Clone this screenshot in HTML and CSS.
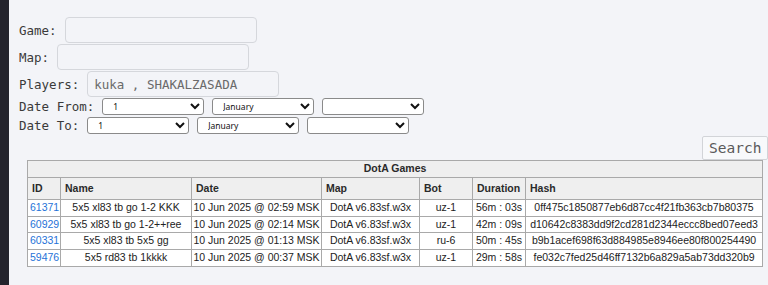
FILE: index.html
```html
<!DOCTYPE html>
<html>

<head>
  <title>DotA Games</title>
  <link rel="stylesheet" href="styles.css">
</head>

<body>
  <form class="search">
    <div class="field">
      <label for="game">Game:</label>
      <input type="text" id="game">
    </div>
    <div class="field">
      <label for="map">Map:</label>
      <input type="text" id="map">
    </div>
    <div class="field">
      <label for="players">Players:</label>
      <input type="text" id="players" value="kuka , SHAKALZASADA">
    </div>
    <div class="field dates">
      <label>Date From:</label>
      <select><option>1</option></select>
      <select><option>January</option></select>
      <select><option></option></select>
    </div>
    <div class="field dates">
      <label>Date To:</label>
      <select><option>1</option></select>
      <select><option>January</option></select>
      <select><option></option></select>
    </div>
    <div class="actions">
      <button type="button">Search</button>
    </div>
  </form>

  <table class="games">
    <colgroup>
      <col class="c-id">
      <col class="c-name">
      <col class="c-date">
      <col class="c-map">
      <col class="c-bot">
      <col class="c-dur">
      <col class="c-hash">
    </colgroup>
    <tr>
      <th colspan="7" class="title">DotA Games</th>
    </tr>
    <tr class="head">
      <th>ID</th>
      <th>Name</th>
      <th>Date</th>
      <th>Map</th>
      <th>Bot</th>
      <th>Duration</th>
      <th>Hash</th>
    </tr>
    <tr>
      <td class="id"><a href="#">61371</a></td>
      <td>5x5 xl83 tb go 1-2 KKK</td>
      <td>10 Jun 2025 @ 02:59 MSK</td>
      <td>DotA v6.83sf.w3x</td>
      <td>uz-1</td>
      <td>56m : 03s</td>
      <td>0ff475c1850877eb6d87cc4f21fb363cb7b80375</td>
    </tr>
    <tr>
      <td class="id"><a href="#">60929</a></td>
      <td>5x5 xl83 tb go 1-2++ree</td>
      <td>10 Jun 2025 @ 02:14 MSK</td>
      <td>DotA v6.83sf.w3x</td>
      <td>uz-1</td>
      <td>42m : 09s</td>
      <td>d10642c8383dd9f2cd281d2344eccc8bed07eed3</td>
    </tr>
    <tr>
      <td class="id"><a href="#">60331</a></td>
      <td>5x5 xl83 tb 5x5 gg</td>
      <td>10 Jun 2025 @ 01:13 MSK</td>
      <td>DotA v6.83sf.w3x</td>
      <td>ru-6</td>
      <td>50m : 45s</td>
      <td>b9b1acef698f63d884985e8946ee80f800254490</td>
    </tr>
    <tr>
      <td class="id"><a href="#">59476</a></td>
      <td>5x5 rd83 tb 1kkkk</td>
      <td>10 Jun 2025 @ 00:37 MSK</td>
      <td>DotA v6.83sf.w3x</td>
      <td>uz-1</td>
      <td>29m : 58s</td>
      <td>fe032c7fed25d46ff7132b6a829a5ab73dd320b9</td>
    </tr>
  </table>
</body>

</html>
```

FILE: styles.css
```css
html {
  background-color: #f3f4f8;
}

body {
  margin: 0;
  min-height: 285px;
  box-sizing: border-box;
  padding: 17px 0 0 10px;
  border-left: 9px solid #24242d;
  background-color: #f3f4f8;
  font-family: "DejaVu Sans Mono", monospace;
  font-size: 12.5px;
  color: #3a3a3a;
}

.search {
  margin: 0;
}

.field {
  display: flex;
  align-items: center;
  gap: 8px;
  margin-bottom: 1px;
}

.field input {
  width: 192px;
  height: 26px;
  box-sizing: border-box;
  padding: 0 6px;
  border: 1px solid #d5d7dc;
  border-radius: 4px;
  background-color: #f3f4f8;
  font-family: "DejaVu Sans Mono", monospace;
  font-size: 12.5px;
  color: #6a6a6a;
  outline: none;
}

.dates {
  margin-top: 1px;
  margin-bottom: 2px;
}

.dates select {
  width: 102px;
  height: 17px;
  box-sizing: border-box;
  padding: 0 0 0 6px;
  border: 1px solid #8a8a8a;
  border-radius: 3px;
  background-color: #ffffff;
  font-family: "Noto Sans", sans-serif;
  font-size: 8.5px;
  color: #111;
}

.actions {
  display: flex;
  justify-content: flex-end;
}

.actions button {
  height: 24px;
  width: 66px;
  margin-top: 0;
  padding: 0 4px 0 6px;
  border: 1px solid #d2d4d8;
  border-radius: 2px;
  background-color: #f8f9fb;
  font-family: "DejaVu Sans Mono", monospace;
  font-size: 14.5px;
  color: #5a5a5a;
  text-align: left;
}

.games {
  margin-left: 8px;
  width: 735px;
  table-layout: fixed;
  border-collapse: collapse;
  border: 1px solid #a9a9a9;
  font-family: "Liberation Sans", Arial, sans-serif;
  font-size: 10.5px;
  color: #222;
}

.c-id { width: 33px; }
.c-name { width: 131px; }
.c-date { width: 130px; }
.c-map { width: 98px; }
.c-bot { width: 53px; }
.c-dur { width: 53px; }
.c-hash { width: 237px; }

.games th,
.games td {
  border: 1px solid #a9a9a9;
  white-space: nowrap;
  overflow: hidden;
}

.games th {
  background-color: #efefef;
  text-align: left;
  padding: 3px 4px;
  line-height: 15.6px;
  font-weight: bold;
  color: #2a2a2a;
}

.games th.title {
  text-align: center;
  padding: 0;
}

.games td {
  background-color: #ffffff;
  text-align: center;
  padding: 0 1px;
  line-height: 15.6px;
}

.games td.id {
  text-align: left;
  padding-left: 2px;
}

.games a {
  color: #1f73d8;
  text-decoration: none;
}
```
